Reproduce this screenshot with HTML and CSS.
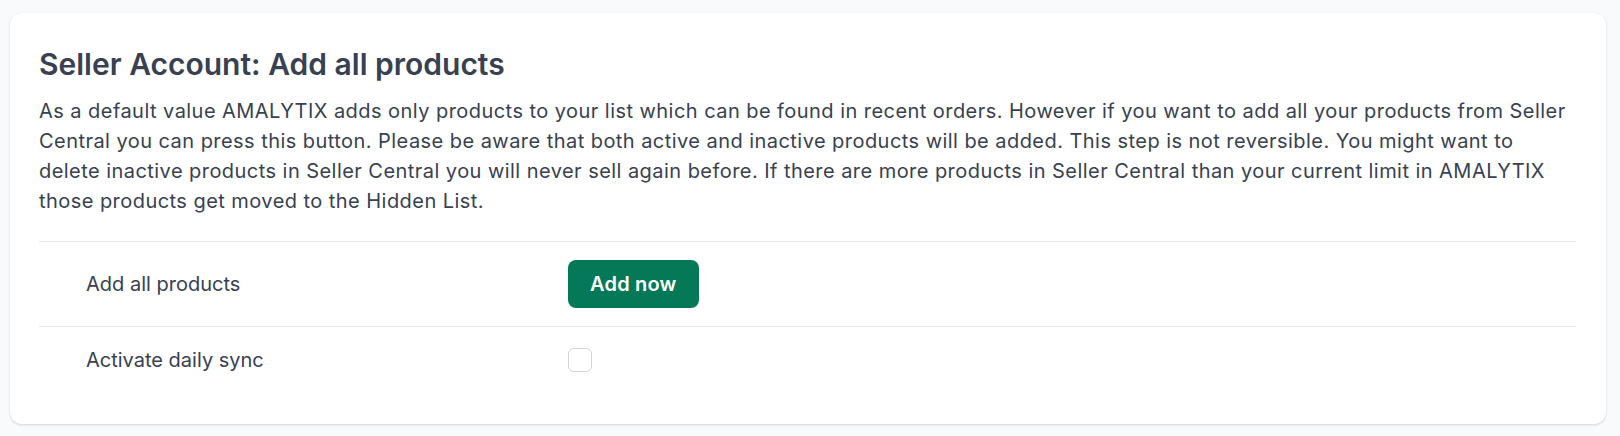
FILE: index.html
```html
<!DOCTYPE html>
<html lang="en">
<head>
<meta charset="utf-8">
<title>Seller Account: Add all products</title>
<link rel="stylesheet" href="styles.css">
</head>
<body>
<main class="page">
  <section class="card">
    <h2 class="card-title">Seller Account: Add all products</h2>
    <p class="card-text">As a default value AMALYTIX adds only products to your list which can be found in recent orders. However if you want to add all your products from Seller Central you can press this button. Please be aware that both active and inactive products will be added. This step is not reversible. You might want to delete inactive products in Seller Central you will never sell again before. If there are more products in Seller Central than your current limit in AMALYTIX those products get moved to the Hidden List.</p>
    <div class="settings">
      <div class="setting-row">
        <div class="setting-label">Add all products</div>
        <div class="setting-control"><button class="btn-primary" type="button">Add now</button></div>
      </div>
      <div class="setting-row">
        <div class="setting-label">Activate daily sync</div>
        <div class="setting-control"><input class="checkbox" type="checkbox"></div>
      </div>
    </div>
  </section>
</main>
</body>
</html>
```

FILE: styles.css
```css
* { box-sizing: border-box; }
html, body { margin: 0; padding: 0; }
body {
  background: #f9fafb;
  font-family: Inter, "Noto Sans", sans-serif;
  color: #374151;
}
.page {
  padding: 13px 14px 12px 10px;
}
.card {
  background: #ffffff;
  border-radius: 12px;
  box-shadow: 0 1px 3px rgba(0, 0, 0, 0.10), 0 1px 2px rgba(0, 0, 0, 0.06);
  padding: 33px 30px 31px 29px;
}
.card-title {
  margin: 0;
  font-size: 30px;
  line-height: 36px;
  font-weight: 600;
  color: #374151;
}
.card-text {
  margin: 14px 0 0 0;
  font-size: 20px;
  line-height: 30px;
  letter-spacing: 0.45px;
  color: #374151;
}
.settings {
  margin-top: 25px;
  border-top: 1px solid #e5e7eb;
}
.setting-row {
  display: grid;
  grid-template-columns: 482px 1fr;
  align-items: center;
  padding: 18px 0 18px 47px;
}
.setting-row + .setting-row {
  border-top: 1px solid #e5e7eb;
}
.setting-label {
  font-size: 20px;
  line-height: 30px;
}
.setting-control {
  display: flex;
  align-items: center;
}
.btn-primary {
  height: 48px;
  padding: 0 22px;
  background: #047857;
  color: #ffffff;
  border: none;
  border-radius: 8px;
  font-family: Inter, "Noto Sans", sans-serif;
  font-size: 20px;
  font-weight: 600;
  letter-spacing: 0.2px;
  cursor: pointer;
}
.checkbox {
  appearance: none;
  -webkit-appearance: none;
  margin: 0;
  width: 24px;
  height: 24px;
  border: 1px solid #d1d5db;
  border-radius: 6px;
  background: #ffffff;
}
```
